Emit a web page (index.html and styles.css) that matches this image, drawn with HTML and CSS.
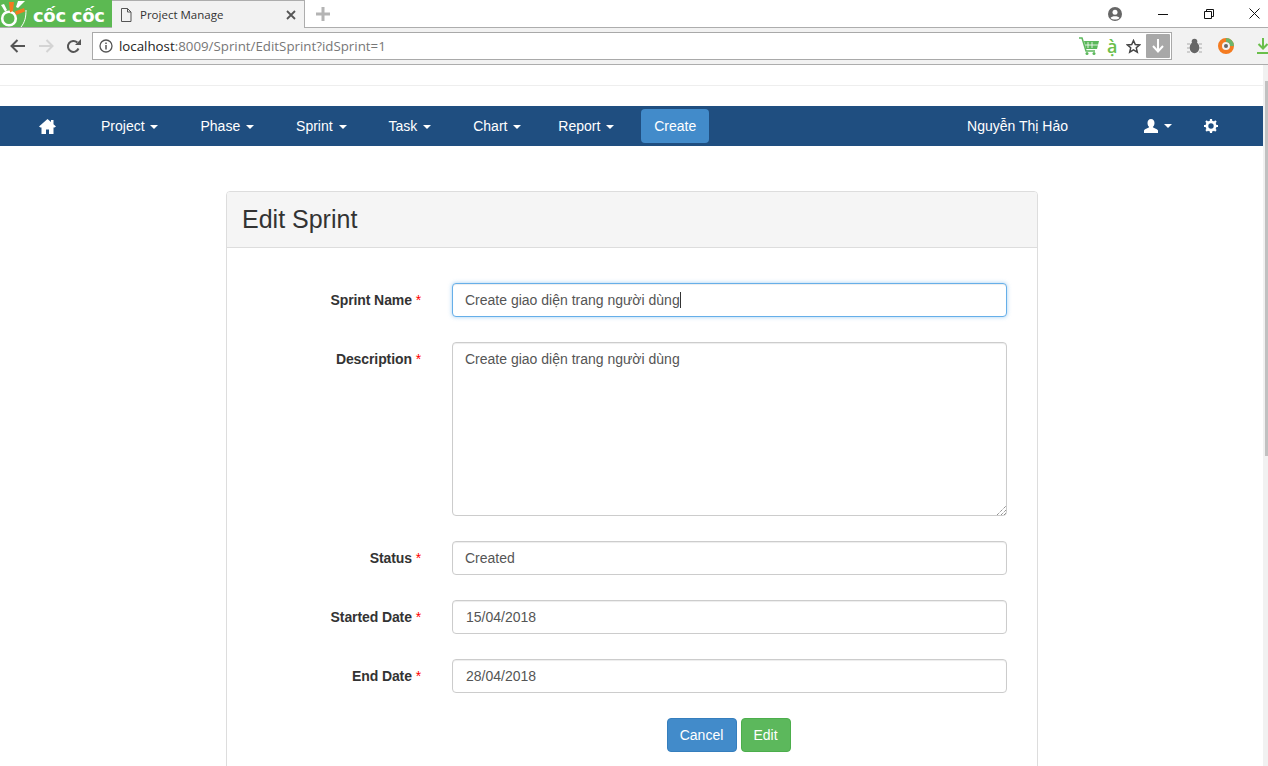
FILE: index.html
```html
<!DOCTYPE html>
<html lang="vi">
<head>
    <meta charset="UTF-8">
    <title>Project Manage</title>
    <link rel="stylesheet" href="styles.css">
</head>
<body>

<!-- browser window -->
<div class="tabstrip">
    <div class="logo">
        <svg class="logo-mark" width="28" height="27" viewBox="0 0 28 27">
            <circle cx="9" cy="18.500" r="6.800" fill="none" stroke="#fff" stroke-width="2.600"/>
            <path d="M9 2h5l-1 9-3 1.500z" fill="#f47b20"/>
            <path d="M15 11.500l9-3.500 1 3.500-9 3.500z" fill="#f47b20"/>
            <path d="M1 5l3-1 3 6-2 1.500z" fill="#fff"/>
            <path d="M18 1h7l-7 7-2-1z" fill="#fff"/>
            <path d="M26 10c0 7-1 12-5 17" fill="none" stroke="#fff" stroke-width="1"/>
        </svg>
        <span class="logo-text">cốc cốc</span>
    </div>
    <div class="tab">
        <svg width="12" height="14" viewBox="0 0 12 14"><path d="M1.500.5h6l3.500 3.500v9.500h-9.500zM7.500.5v3.500h3.500" fill="none" stroke="#555" stroke-width="1"/></svg>
        <span class="tab-title">Project Manage</span>
        <svg class="tab-close" width="10" height="10" viewBox="0 0 10 10"><path d="M1 1l8 8M9 1l-8 8" stroke="#555" stroke-width="1.800"/></svg>
    </div>
    <svg class="new-tab" width="14" height="14" viewBox="0 0 14 14"><path d="M7 0v14M0 7h14" stroke="#b4b4b4" stroke-width="3"/></svg>
    <div class="window-btns">
        <svg class="profile" width="14" height="14" viewBox="0 0 14 14"><circle cx="7" cy="7" r="7" fill="#666"/><circle cx="7" cy="5.200" r="2.500" fill="#fff"/><path d="M2.500 11c1-2.500 8-2.500 9 0-2 2-7 2-9 0z" fill="#fff"/></svg>
        <svg class="win-min" width="10" height="10" viewBox="0 0 10 10"><path d="M0 5.500h10" stroke="#111"/></svg>
        <svg class="win-max" width="10" height="10" viewBox="0 0 10 10"><path d="M.5 2.500h7v7h-7zM2.500 2.500v-2h7v7h-2" fill="none" stroke="#111"/></svg>
        <svg class="win-close" width="11" height="11" viewBox="0 0 11 11"><path d="M.5.500l10 10M10.500.500l-10 10" stroke="#111"/></svg>
    </div>
</div>

<div class="toolbar">
    <svg class="tool-back" width="16" height="14" viewBox="0 0 16 14"><path d="M15 7H2M7.500 1L1.500 7l6 6" fill="none" stroke="#555" stroke-width="2"/></svg>
    <svg class="tool-forward" width="16" height="14" viewBox="0 0 16 14"><path d="M1 7h13M8.500 1l6 6-6 6" fill="none" stroke="#d4d4d4" stroke-width="2"/></svg>
    <svg class="tool-reload" width="15" height="15" viewBox="0 0 15 15"><path d="M12.500 9.500A5.500 5.500 0 1 1 11.300 3.500" fill="none" stroke="#555" stroke-width="2"/><path d="M9 6h6V0z" fill="#555"/></svg>
    <div class="omnibox">
        <svg width="14" height="14" viewBox="0 0 14 14"><circle cx="7" cy="7" r="6" fill="none" stroke="#555" stroke-width="1.300"/><path d="M7 6v4.500M7 3.500v1.500" stroke="#555" stroke-width="1.500"/></svg>
        <span class="url"><span class="url-host">localhost</span>:8009/Sprint/EditSprint?idSprint=1</span>
        <svg class="omni-cart" width="20" height="19" viewBox="0 0 20 19"><path d="M0 1h3l4 13h9" fill="none" stroke="#5cb85c" stroke-width="1.500"/><path d="M5 4h15l-2 8H7z" fill="#5cb85c"/><path d="M9 5v6M13 5v6M6 8h13" stroke="#fff" stroke-width=".8"/><circle cx="8" cy="16.500" r="1.500" fill="#5cb85c"/><circle cx="15" cy="16.500" r="1.500" fill="#5cb85c"/></svg>
        <span class="omni-a">ạ̀</span>
        <svg class="omni-star" width="15" height="15" viewBox="0 0 15 15"><path d="M7.500 1.500l1.800 4 4.300.4-3.300 2.900 1 4.300-3.800-2.300-3.800 2.300 1-4.300L1.400 5.900l4.300-.4z" fill="none" stroke="#444" stroke-width="1.500"/></svg>
        <div class="omni-save">
            <svg width="12" height="14" viewBox="0 0 12 14"><path d="M6 0v12M1 7l5 5.500L11 7" fill="none" stroke="#fff" stroke-width="2"/></svg>
        </div>
    </div>
    <svg class="ext-bug" width="15" height="16" viewBox="0 0 15 16"><ellipse cx="7.500" cy="9.500" rx="4.800" ry="5.800" fill="#666"/><circle cx="7.500" cy="3.500" r="2.800" fill="#666"/><path d="M0 6h3M0 10h3M0 14h3M12 6h3M12 10h3M12 14h3" stroke="#aaa"/></svg>
    <svg class="ext-ring" width="16" height="16" viewBox="0 0 16 16"><circle cx="8" cy="8" r="6" fill="none" stroke="#f47b20" stroke-width="4"/><path d="M8 2a6 6 0 0 1 6 6" fill="none" stroke="#6cb56c" stroke-width="4"/><circle cx="8" cy="8" r="2" fill="#666"/></svg>
    <svg class="ext-down" width="12" height="16" viewBox="0 0 12 16"><path d="M6 0v10M1.500 6L6 10.500 10.500 6M0 15h12" fill="none" stroke="#6abf4b" stroke-width="2"/></svg>
</div>

<!-- page -->
<div class="viewport">
    <div class="page">
        <div class="top-strip"></div>

        <nav class="navbar">
            <a class="nav-home" href="#">
                <svg width="17" height="15" viewBox="0 0 17 15"><path d="M8.500 0l3.500 3V1h2.500v4.200L17 7.500 15.500 8.500H14.500V15H10v-4.500H7V15H2.500V8.500H1.500L0 7.500z" fill="#fff"/></svg>
            </a>
            <a class="nav-link" href="#">Project <span class="caret"></span></a>
            <a class="nav-link" href="#">Phase <span class="caret"></span></a>
            <a class="nav-link" href="#">Sprint <span class="caret"></span></a>
            <a class="nav-link" href="#">Task <span class="caret"></span></a>
            <a class="nav-link nav-link-chart" href="#">Chart <span class="caret"></span></a>
            <a class="nav-link nav-link-last" href="#">Report <span class="caret"></span></a>
            <a class="nav-create" href="#">Create</a>
            <div class="nav-right">
                <span class="nav-user">Nguyễn Thị Hảo</span>
                <a class="nav-icon" href="#">
                    <svg width="14" height="14" viewBox="0 0 14 14"><path d="M7 0c2.300 0 3.500 1.700 3.500 4 0 1.800-.8 3.300-1.700 4 .3 1 4.200 1.500 5.200 3.500V14H0v-2.500C1 9.500 4.900 9 5.200 8 4.300 7.300 3.500 5.800 3.500 4 3.500 1.700 4.700 0 7 0z" fill="#fff"/></svg>
                    <span class="caret"></span>
                </a>
                <a class="nav-gear" href="#">
                    <svg width="14" height="14" viewBox="0 0 14 14"><circle cx="7" cy="7" r="4.100" fill="none" stroke="#fff" stroke-width="2.800"/><path d="M7 0v14M0 7h14M2 2l10 10M12 2L2 12" stroke="#fff" stroke-width="2.200" stroke-dasharray="2.400 9.200"/></svg>
                </a>
            </div>
        </nav>

        <div class="panel">
            <div class="panel-heading">Edit Sprint</div>
            <form class="panel-body">
                <label class="form-label">Sprint Name <span class="req">*</span></label>
                <div class="form-control focused">Create giao diện trang người dùng<span class="text-cursor"></span></div>

                <label class="form-label">Description <span class="req">*</span></label>
                <div class="form-control form-textarea">Create giao diện trang người dùng
                    <svg class="resize-grip" width="9" height="9" viewBox="0 0 9 9"><path d="M0 9l9-9M4 9l5-5M7 9l2-2" stroke="#666" stroke-width="1" stroke-dasharray="1 1"/></svg>
                </div>

                <label class="form-label">Status <span class="req">*</span></label>
                <div class="form-control">Created</div>

                <label class="form-label">Started Date <span class="req">*</span></label>
                <div class="form-control date-value">15/04/2018</div>

                <label class="form-label">End Date <span class="req">*</span></label>
                <div class="form-control date-value">28/04/2018</div>

                <div class="form-actions">
                    <button type="button" class="btn btn-primary">Cancel</button>
                    <button type="button" class="btn btn-success">Edit</button>
                </div>
            </form>
        </div>
    </div>

    <div class="scrollbar"><div class="scroll-thumb"></div></div>
</div>

</body>
</html>
```

FILE: styles.css
```css
html, body {
    margin: 0;
    height: 766px;
    overflow: hidden;
}

body {
    font-family: "Liberation Sans", Arial, sans-serif;
    font-size: 14px;
    color: #333;
    background: #fff;
}

/* Tab strip */
.tabstrip {
    display: flex;
    align-items: flex-start;
    height: 27px;
    border-bottom: 1px solid #adadad;
    background: #fff;
}

.logo {
    display: flex;
    align-items: center;
    width: 112px;
    height: 27px;
    background: #5cb952;
    overflow: hidden;
}

.logo-mark {
    flex-shrink: 0;
}

.logo-text {
    margin: 3px 0 0 5px;
    font-family: "DejaVu Sans", sans-serif;
    font-size: 18px;
    font-weight: 700;
    letter-spacing: -.3px;
    color: #fff;
    white-space: nowrap;
}

.tab {
    display: flex;
    align-items: center;
    box-sizing: border-box;
    width: 193px;
    height: 28px;
    padding: 0 8px;
    background: #f2f2f2;
    border: 1px solid #adadad;
    border-width: 1px 1px 0 0;
}

.tab-title {
    margin-left: 8px;
    font-family: "Open Sans", sans-serif;
    font-size: 11.5px;
    color: #333;
}

.tab-close {
    margin-left: auto;
}

.new-tab {
    margin: 7px 0 0 11px;
}

.window-btns {
    display: flex;
    align-items: center;
    margin-left: auto;
    height: 27px;
}

.profile {
    margin-right: 36px;
}

.win-min {
    margin-right: 36px;
}

.win-max {
    margin-right: 35px;
}

.win-close {
    margin-right: 8px;
}

/* Toolbar */
.toolbar {
    display: flex;
    align-items: center;
    box-sizing: border-box;
    height: 37px;
    padding: 0 0 0 10px;
    background: #f2f2f2;
    border-bottom: 1px solid #adadad;
    overflow: hidden;
}

.toolbar svg {
    flex-shrink: 0;
}

.tool-forward {
    margin-left: 12px;
}

.tool-reload {
    margin-left: 12px;
}

.omnibox {
    display: flex;
    flex-shrink: 0;
    align-items: center;
    box-sizing: border-box;
    width: 1080px;
    height: 28px;
    margin-left: 11px;
    padding: 0 0 0 6px;
    background: #fff;
    border: 1px solid #a9a9a9;
}

.url {
    margin-left: 6px;
    font-family: "Open Sans", sans-serif;
    font-size: 13.3px;
    color: #777;
}

.url-host {
    color: #222;
}

.omni-cart {
    margin-left: auto;
}

.omni-a {
    width: 10px;
    margin-left: 8px;
    font-family: "Open Sans", sans-serif;
    font-size: 18px;
    font-weight: 600;
    line-height: 20px;
    color: #6abf4b;
}

.omni-star {
    margin-left: 9px;
}

.omni-save {
    display: flex;
    align-items: center;
    justify-content: center;
    width: 24px;
    height: 24px;
    margin-left: 5px;
    margin-right: 1px;
    background: #a8a8a8;
    border-radius: 1px;
}

.ext-bug {
    margin-left: 15px;
}

.ext-ring {
    margin-left: 16px;
}

.ext-down {
    margin-left: 23px;
}

/* Page area */
.viewport {
    display: flex;
    height: 701px;
    overflow: hidden;
}

.page {
    flex: 1;
    min-width: 0;
}

.scrollbar {
    width: 5px;
    background: #f1f1f1;
}

.scroll-thumb {
    height: 375px;
    margin: 16px 0 0 2px;
    background: #c1c1c1;
}

.top-strip {
    height: 20px;
    border-bottom: 1px solid #eee;
    margin-bottom: 20px;
}

/* Navbar */
.navbar {
    display: flex;
    align-items: center;
    height: 40px;
    padding-left: 39px;
    background: #1f4e80;
}

.navbar a {
    color: #fff;
    text-decoration: none;
}

.nav-home {
    display: flex;
    margin-right: 45px;
}

.nav-link {
    margin-right: 42px;
}

.nav-link-chart {
    margin-right: 37px;
}

.nav-link-last {
    margin-right: 27px;
}

.caret {
    display: inline-block;
    width: 0;
    height: 0;
    margin-left: 2px;
    vertical-align: middle;
    border-top: 4px solid #fff;
    border-left: 4px solid transparent;
    border-right: 4px solid transparent;
}

.nav-create {
    box-sizing: border-box;
    width: 68px;
    height: 34px;
    line-height: 34px;
    text-align: center;
    background: #428bca;
    border-radius: 4px;
}

.nav-right {
    display: flex;
    align-items: center;
    margin-left: auto;
    padding-right: 45px;
    color: #fff;
}

.nav-icon {
    display: flex;
    align-items: center;
    margin-left: 76px;
}

.nav-icon .caret {
    margin-left: 6px;
}

.nav-gear {
    display: flex;
    margin-left: 32px;
}

/* Panel */
.panel {
    box-sizing: border-box;
    width: 812px;
    height: 600px;
    margin: 45px 0 0 226px;
    background: #fff;
    border: 1px solid #ddd;
    border-radius: 4px;
}

.panel-heading {
    box-sizing: border-box;
    height: 56px;
    padding: 0 15px;
    font-size: 25px;
    line-height: 55px;
    background: #f5f5f5;
    border-bottom: 1px solid #ddd;
    border-radius: 3px 3px 0 0;
}

.panel-body {
    display: grid;
    grid-template-columns: 194px 555px;
    column-gap: 31px;
    row-gap: 25px;
    padding-top: 35px;
}

.form-label {
    font-weight: 700;
    line-height: 34px;
    letter-spacing: -.1px;
    text-align: right;
    white-space: nowrap;
}

.req {
    color: #f00;
    font-weight: 400;
}

.form-control {
    position: relative;
    box-sizing: border-box;
    height: 34px;
    padding: 0 12px;
    line-height: 32px;
    color: #555;
    background: #fff;
    border: 1px solid #ccc;
    border-radius: 4px;
    box-shadow: inset 0 1px 1px rgba(0, 0, 0, .075);
}

.focused {
    border-color: #66afe9;
    box-shadow: inset 0 1px 1px rgba(0, 0, 0, .075), 0 0 4px rgba(102, 175, 233, .6);
}

.text-cursor {
    display: inline-block;
    width: 1px;
    height: 16px;
    vertical-align: -3px;
    background: #333;
}

.form-textarea {
    height: 174px;
}

.resize-grip {
    position: absolute;
    right: 0;
    bottom: 0;
}

.date-value {
    padding-left: 13px;
}

.form-actions {
    grid-column: 2;
    display: flex;
    justify-content: center;
    gap: 4px;
    padding-right: 2px;
}

.btn {
    height: 34px;
    padding: 0;
    font-family: inherit;
    font-size: 14px;
    color: #fff;
    border: 1px solid transparent;
    border-radius: 4px;
}

.btn-primary {
    width: 70px;
    background: #428bca;
    border-color: #357ebd;
}

.btn-success {
    width: 50px;
    background: #5cb85c;
    border-color: #4cae4c;
}
```
